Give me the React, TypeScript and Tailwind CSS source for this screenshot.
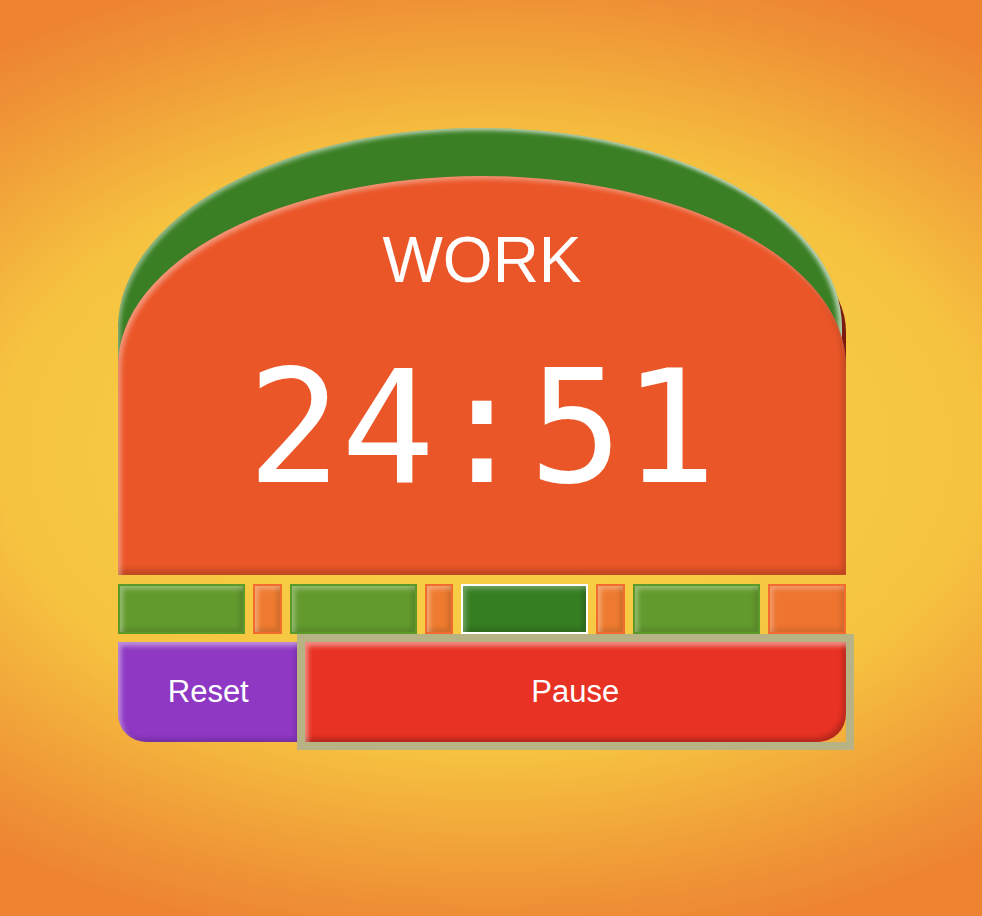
import React from 'react';

type Seg = { kind: 'work' | 'short' | 'long'; current?: boolean };

const segments: Seg[] = [
  { kind: 'work' },
  { kind: 'short' },
  { kind: 'work' },
  { kind: 'short' },
  { kind: 'work', current: true },
  { kind: 'short' },
  { kind: 'work' },
  { kind: 'long' },
];

function Segment({ seg }: { seg: Seg }) {
  if (seg.kind === 'work') {
    return (
      <div
        className={
          'flex-[5] border-2 ' +
          (seg.current
            ? 'bg-[#367e22] border-white shadow-[inset_3px_3px_5px_rgba(255,255,255,0.3),inset_-3px_-3px_5px_rgba(0,0,0,0.2)]'
            : 'bg-[#639a2d] border-[#5b9a29] shadow-[inset_3px_3px_5px_rgba(255,255,255,0.35),inset_-3px_-3px_5px_rgba(0,0,0,0.15)]')
        }
      />
    );
  }
  if (seg.kind === 'short') {
    return (
      <div className="flex-[1] border-2 border-[#f26d2d] bg-[#ee7b2f] shadow-[inset_3px_3px_5px_rgba(255,255,255,0.35),inset_-3px_-3px_5px_rgba(0,0,0,0.15)]" />
    );
  }
  return (
    <div className="flex-[3] border-2 border-[#f26d2d] bg-[#ee7430] shadow-[inset_3px_3px_5px_rgba(255,255,255,0.3),inset_-3px_-3px_5px_rgba(0,0,0,0.12)]" />
  );
}

export default function App() {
  return (
    <div className="min-h-screen w-full bg-[radial-gradient(ellipse_816px_500px_at_490px_450px,#f8d649_0%,#f6c340_60%,#ef9236_90%,#ee8432_100%)]">
      <div className="pt-[128px] pl-[118px]">
        <div className="w-[728px]">
          {/* ── stacked cards ── */}
          <div className="relative pt-[48px]">
            {/* back layers */}
            <div className="absolute left-0 right-0 top-[44px] bottom-0 bg-[#7a1a10] rounded-[50%_50%_0_0/160px_160px_0_0]" />
            <div className="absolute left-0 right-[4px] top-0 bottom-0 bg-[#3a7f24] rounded-[50%_50%_0_0/200px_200px_0_0] shadow-[inset_2px_3px_4px_rgba(255,255,255,0.45),inset_-4px_0_4px_rgba(255,255,255,0.6)]" />

            {/* main card */}
            <div
              className="relative h-[399px] flex flex-col items-center bg-[#eb5628] rounded-[50%_50%_0_0/190px_190px_0_0] shadow-[inset_3px_3px_5px_rgba(255,255,255,0.4),inset_-3px_-5px_6px_rgba(0,0,0,0.2)]"
              style={{ fontFamily: '"Liberation Sans", Arial, sans-serif' }}
            >
              <p className="pt-[52px] text-[64px] leading-none text-white">WORK</p>
              <p
                className="mt-[58px] text-[156px] leading-none text-white"
                style={{ fontFamily: '"DejaVu Sans Mono", "Liberation Mono", monospace' }}
              >
                24:51
              </p>
            </div>
          </div>

          {/* ── session progress ── */}
          <div className="mt-[9px] h-[50px] flex gap-2">
            {segments.map((s, i) => (
              <Segment key={i} seg={s} />
            ))}
          </div>

          {/* ── controls ── */}
          <div
            className="mt-2 h-[100px] flex gap-[6px] text-[31px] text-white"
            style={{ fontFamily: '"Liberation Sans", Arial, sans-serif' }}
          >
            <button className="flex-[1] flex items-center justify-center bg-[#8e38c4] rounded-bl-[28px] shadow-[inset_3px_4px_5px_rgba(255,255,255,0.45),inset_-3px_-3px_5px_rgba(0,0,0,0.2)]">
              Reset
            </button>
            <div className="flex-[3] flex outline-8 outline-solid outline-[#b8b385]">
              <button className="flex-1 flex items-center justify-center bg-[#e83223] rounded-br-[28px] shadow-[inset_3px_4px_5px_rgba(255,255,255,0.45),inset_-3px_-4px_5px_rgba(0,0,0,0.22)]">
                Pause
              </button>
            </div>
          </div>
        </div>
      </div>
    </div>
  );
}
